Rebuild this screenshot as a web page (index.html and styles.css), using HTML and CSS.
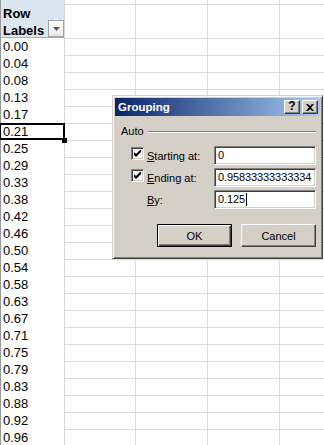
FILE: index.html
```html
<!DOCTYPE html>
<html>
<head>
<meta charset="utf-8">
<link rel="stylesheet" href="styles.css">
</head>
<body>
<div class="sheet">
  <div class="col-a">
    <div class="hdr">
      <div class="hdr-text">Row<br>Labels</div>
      <span class="dd"><svg width="7" height="4" viewBox="0 0 7 4"><path d="M0 0H7L3.5 4Z" fill="#555"/></svg></span>
    </div>
    <div class="cell">0.00</div>
    <div class="cell">0.04</div>
    <div class="cell">0.08</div>
    <div class="cell">0.13</div>
    <div class="cell">0.17</div>
    <div class="cell sel">0.21</div>
    <div class="cell">0.25</div>
    <div class="cell">0.29</div>
    <div class="cell">0.33</div>
    <div class="cell">0.38</div>
    <div class="cell">0.42</div>
    <div class="cell">0.46</div>
    <div class="cell">0.50</div>
    <div class="cell">0.54</div>
    <div class="cell">0.58</div>
    <div class="cell">0.63</div>
    <div class="cell">0.67</div>
    <div class="cell">0.71</div>
    <div class="cell">0.75</div>
    <div class="cell">0.79</div>
    <div class="cell">0.83</div>
    <div class="cell">0.88</div>
    <div class="cell">0.92</div>
    <div class="cell">0.96</div>
  </div>
  <div class="rest">
    <div class="r r-top"></div>
    <div class="r r-hdr"></div>
    <div class="r"></div><div class="r"></div><div class="r"></div><div class="r"></div>
    <div class="r"></div><div class="r"></div><div class="r"></div><div class="r"></div>
    <div class="r"></div><div class="r"></div><div class="r"></div><div class="r"></div>
    <div class="r"></div><div class="r"></div><div class="r"></div><div class="r"></div>
    <div class="r"></div><div class="r"></div><div class="r"></div><div class="r"></div>
    <div class="r"></div><div class="r"></div><div class="r"></div><div class="r"></div>
  </div>
</div>

<div class="dlg">
  <div class="title">
    <span class="title-text">Grouping</span>
    <span class="tb tb-help">?</span>
    <span class="tb tb-close"><svg width="8" height="7" viewBox="0 0 8 7"><path d="M0 0H2L4 2L6 0H8L5 3.5L8 7H6L4 5L2 7H0L3 3.5Z" fill="#000"/></svg></span>
  </div>
  <div class="body">
    <div class="group">
      <span>Auto</span>
      <span class="etch"></span>
    </div>
    <div class="form">
      <span class="cb"><svg width="7" height="7" viewBox="0 0 7 7"><path d="M0 2L2 4L7 -1V2L2 7L0 5Z" fill="#000"/></svg></span>
      <span class="lbl"><u>S</u>tarting at:</span>
      <span class="inp">0</span>

      <span class="cb"><svg width="7" height="7" viewBox="0 0 7 7"><path d="M0 2L2 4L7 -1V2L2 7L0 5Z" fill="#000"/></svg></span>
      <span class="lbl"><u>E</u>nding at:</span>
      <span class="inp">0.95833333333334</span>

      <span></span>
      <span class="lbl"><u>B</u>y:</span>
      <span class="inp">0.125<span class="caret"></span></span>
    </div>
    <div class="buttons">
      <span class="btn btn-default">OK</span>
      <span class="btn">Cancel</span>
    </div>
  </div>
</div>
</body>
</html>
```
FILE: styles.css
```css
html, body {
  margin: 0;
  padding: 0;
  background: #fff;
  overflow: hidden;
}

.sheet {
  display: flex;
  width: 324px;
  height: 445px;
  font-family: "Liberation Sans", Arial, sans-serif;
  font-size: 13px;
  color: #000;
}

.col-a {
  width: 63px;
  flex: none;
  border-left: 1px solid #9a9a9a;
  border-right: 1px solid #d6d6d6;
  background: #fff;
}

.hdr {
  box-sizing: border-box;
  height: 38px;
  background: #dce6f1;
  border-bottom: 1px solid #95b3d7;
  display: flex;
  align-items: flex-end;
  justify-content: space-between;
}

.hdr-text {
  align-self: flex-start;
  padding: 5px 0 0 2px;
  line-height: 17px;
  font-weight: bold;
}

.dd {
  box-sizing: border-box;
  width: 16px;
  height: 17px;
  border: 1px solid #a3a3a3;
  background: linear-gradient(#fefefe, #e9e9e9);
  display: flex;
  align-items: center;
  justify-content: center;
}

.cell {
  height: 17px;
  line-height: 17px;
  padding-left: 2px;
}

.sel {
  position: relative;
}

.sel::after {
  content: "";
  position: absolute;
  left: -2px;
  top: 0;
  right: -1px;
  height: 17px;
  box-sizing: border-box;
  border: 2px solid #000;
}

.sel::before {
  content: "";
  position: absolute;
  right: -3px;
  bottom: -3px;
  width: 5px;
  height: 5px;
  background: #000;
  z-index: 1;
}

.rest {
  flex: 1;
  background-image: repeating-linear-gradient(to right, transparent 0 70px, #dadada 70px 71px, transparent 71px 72px);
}

.r {
  height: 16px;
  border-bottom: 1px solid #dadada;
}

.r-top {
  height: 4px;
}

.r-hdr {
  height: 33px;
}

/* Dialog */
.dlg {
  position: absolute;
  left: 112px;
  top: 95px;
  width: 211px;
  height: 164px;
  box-sizing: border-box;
  background: #d4d0c8;
  border: 1px solid;
  border-color: #d4d0c8 #404040 #404040 #d4d0c8;
  box-shadow: inset 1px 1px #fff, inset -1px -1px #808080;
  padding: 2px;
  font-family: "Liberation Sans", Arial, sans-serif;
  font-size: 11px;
  color: #000;
}

.title {
  height: 18px;
  display: flex;
  align-items: center;
  background: linear-gradient(to right, #0a246a, #a6caf0);
  padding: 0 2px 0 3px;
}

.title-text {
  flex: 1;
  color: #fff;
  font-weight: bold;
  font-size: 11.5px;
}

.tb {
  box-sizing: border-box;
  width: 16px;
  height: 14px;
  background: #d4d0c8;
  border: 1px solid;
  border-color: #fff #404040 #404040 #fff;
  box-shadow: inset -1px -1px #808080;
  display: flex;
  align-items: center;
  justify-content: center;
}

.tb-help {
  font-weight: bold;
  font-size: 12px;
  line-height: 11px;
  margin-right: 2px;
  padding-bottom: 1px;
}

.body {
  padding: 9px 4px 0 6px;
}

.group {
  display: flex;
  align-items: center;
  line-height: 13px;
}

.etch {
  flex: 1;
  margin-left: 4px;
  border-top: 1px solid #808080;
  border-bottom: 1px solid #fff;
}

.form {
  margin: 8px 0 0 10px;
  display: grid;
  grid-template-columns: 16px 67px 102px;
  grid-auto-rows: 19px;
  row-gap: 3px;
  align-items: center;
}

.cb {
  box-sizing: border-box;
  width: 13px;
  height: 13px;
  align-self: start;
  margin-top: 1px;
  background: #fff;
  border: 1px solid;
  border-color: #808080 #fff #fff #808080;
  box-shadow: inset 1px 1px #404040, inset -1px -1px #d4d0c8;
  display: flex;
  align-items: center;
  justify-content: center;
}

.lbl {
  white-space: nowrap;
}

.inp {
  box-sizing: border-box;
  height: 19px;
  background: #fff;
  border: 1px solid;
  border-color: #808080 #fff #fff #808080;
  box-shadow: inset 1px 1px #404040, inset -1px -1px #d4d0c8;
  padding: 0 0 0 3px;
  line-height: 17px;
  white-space: nowrap;
  overflow: hidden;
  display: flex;
  align-items: center;
  letter-spacing: -0.1px;
}

.caret {
  display: inline-block;
  width: 1px;
  height: 13px;
  background: #000;
  margin-left: 1px;
}

.buttons {
  margin-top: 15px;
  display: flex;
  justify-content: flex-end;
  gap: 9px;
}

.btn {
  box-sizing: border-box;
  width: 75px;
  height: 23px;
  border: 1px solid;
  border-color: #fff #404040 #404040 #fff;
  box-shadow: inset -1px -1px #808080;
  display: flex;
  align-items: center;
  justify-content: center;
}

.btn-default {
  border: 1px solid #000;
  box-shadow: inset 1px 1px #fff, inset -1px -1px #404040, inset -2px -2px #808080;
}
```
